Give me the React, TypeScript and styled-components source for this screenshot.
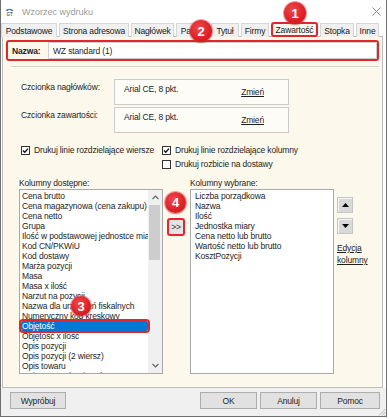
import React from 'react';
import styled, { createGlobalStyle } from 'styled-components';

const GlobalStyle = createGlobalStyle`
  html, body {
    margin: 0;
    padding: 0;
    background: #ffffff;
  }
  body {
    font-family: 'Liberation Sans', Arial, sans-serif;
    font-size: 8.5px;
    letter-spacing: -0.15px;
    color: #1e1e1e;
  }
`;

const CREAM = '#fcf8eb';
const RED = '#e3262b';

const availableColumns = [
  'Cena brutto',
  'Cena magazynowa (cena zakupu)',
  'Cena netto',
  'Grupa',
  'Ilość w podstawowej jednostce miary',
  'Kod CN/PKWiU',
  'Kod dostawy',
  'Marża pozycji',
  'Masa',
  'Masa x ilość',
  'Narzut na pozycji',
  'Nazwa dla urządzeń fiskalnych',
  'Numeryczny kod kreskowy',
  'Objętość',
  'Objętość x ilość',
  'Opis pozycji',
  'Opis pozycji (2 wiersz)',
  'Opis towaru',
  'Opis towaru (2 wiersz)',
];

const chosenColumns = [
  'Liczba porządkowa',
  'Nazwa',
  'Ilość',
  'Jednostka miary',
  'Cena netto lub brutto',
  'Wartość netto lub brutto',
  'KosztPozycji',
];

const tabs = [
  { label: 'Podstawowe', w: 56 },
  { label: 'Strona adresowa', w: 70 },
  { label: 'Nagłówek', w: 43 },
  { label: 'Papier', w: 33 },
  { label: 'Tytuł', w: 28 },
  { label: 'Firmy', w: 28 },
  { label: 'Zawartość', w: 47, active: true },
  { label: 'Stopka', w: 34 },
  { label: 'Inne', w: 23 },
];

const badges = [
  { n: 1, x: 283, y: 2, d: 22 },
  { n: 2, x: 189, y: 20, d: 22 },
  { n: 3, x: 70, y: 296, d: 20 },
  { n: 4, x: 164, y: 192, d: 21 },
];

const App = (): JSX.Element => {
  return (
    <>
      <GlobalStyle />
      <Window>
        <TitleBar>
          <AppIcon />
          <Title>Wzorzec wydruku</Title>
          <CloseIcon />
        </TitleBar>

        <TabStrip>
          {tabs.map((t) => (
            <Tab key={t.label} $w={t.w} $active={!!t.active}>
              {t.label}
            </Tab>
          ))}
        </TabStrip>

        <Panel>
          <NameRow>
            <NameLabel>Nazwa:</NameLabel>
            <NameInput>WZ standard (1)</NameInput>
          </NameRow>
          <Separator />

          <FontGrid>
            <FontLabel>Czcionka nagłówków:</FontLabel>
            <FontBox>
              <span>Arial CE, 8 pkt.</span>
              <Link $low>Zmień</Link>
            </FontBox>
            <FontLabel>Czcionka zawartości:</FontLabel>
            <FontBox>
              <span>Arial CE, 8 pkt.</span>
              <Link $low>Zmień</Link>
            </FontBox>
          </FontGrid>

          <CheckGrid>
            <CheckItem>
              <CheckBox checked />
              Drukuj linie rozdzielające wiersze
            </CheckItem>
            <CheckItem>
              <CheckBox checked />
              Drukuj linie rozdzielające kolumny
            </CheckItem>
            <span />
            <CheckItem>
              <CheckBox />
              Drukuj rozbicie na dostawy
            </CheckItem>
          </CheckGrid>

          <ColumnsArea>
            <ListLabel>Kolumny dostępne:</ListLabel>
            <span />
            <ListLabel>Kolumny wybrane:</ListLabel>
            <span />

            <ListBox>
              <Items $pad={1}>
                {availableColumns.map((c) => (
                  <Item key={c} $selected={c === 'Objętość'}>
                    {c}
                  </Item>
                ))}
              </Items>
              <ScrollBar>
                <ScrollArrow>
                  <Chevron dir="up" />
                </ScrollArrow>
                <Thumb />
                <ScrollArrow $end>
                  <Chevron dir="down" />
                </ScrollArrow>
              </ScrollBar>
            </ListBox>

            <MidColumn>
              <MoveButton>&gt;&gt;</MoveButton>
            </MidColumn>

            <ListBox>
              <Items $pad={3}>
                {chosenColumns.map((c) => (
                  <Item key={c}>{c}</Item>
                ))}
              </Items>
            </ListBox>

            <SideColumn>
              <ArrowButton>
                <Triangle dir="up" />
              </ArrowButton>
              <ArrowButton>
                <Triangle dir="down" />
              </ArrowButton>
              <EditLink>
                Edycja
                <br />
                kolumny
              </EditLink>
            </SideColumn>
          </ColumnsArea>
        </Panel>

        <BottomBar>
          <Button $w={56}>Wypróbuj</Button>
          <Spacer />
          <Button $w={57}>OK</Button>
          <Button $w={57}>Anuluj</Button>
          <Button $w={60}>Pomoc</Button>
          <Grip />
        </BottomBar>

        {badges.map((b) => (
          <Badge key={b.n} $x={b.x} $y={b.y} $d={b.d}>
            {b.n}
          </Badge>
        ))}
      </Window>
    </>
  );
};

export default App;

const AppIcon = (): JSX.Element => (
  <svg width="9" height="9" viewBox="0 0 9 9">
    <path d="M0.5 4 C1.5 1 7.5 1 8.5 4 L6.5 4 C5.5 2.6 3.5 2.6 2.5 4 Z" fill="#4b7aa3" />
    <text x="4.5" y="8.6" fontSize="4.6" fontWeight="bold" fill="#3f6f98" textAnchor="middle" fontFamily="Liberation Sans, sans-serif">
      GT
    </text>
  </svg>
);

const CloseIcon = (): JSX.Element => (
  <CloseWrap>
    <svg width="9" height="9" viewBox="0 0 9 9">
      <path d="M0.5 0.5 L8.5 8.5 M8.5 0.5 L0.5 8.5" stroke="#8c8c8c" strokeWidth="1" />
    </svg>
  </CloseWrap>
);

const CheckBox = ({ checked }: { checked?: boolean }): JSX.Element => (
  <Box>
    {checked && (
      <svg width="7" height="7" viewBox="0 0 7 7">
        <path d="M1 3.4 L2.8 5.2 L6 1.6" stroke="#111" strokeWidth="1.4" fill="none" />
      </svg>
    )}
  </Box>
);

const Chevron = ({ dir }: { dir: 'up' | 'down' }): JSX.Element => (
  <svg width="7" height="5" viewBox="0 0 7 5">
    <path d={dir === 'up' ? 'M0.5 4 L3.5 1 L6.5 4' : 'M0.5 1 L3.5 4 L6.5 1'} stroke="#606060" strokeWidth="1.1" fill="none" />
  </svg>
);

const Triangle = ({ dir }: { dir: 'up' | 'down' }): JSX.Element => (
  <svg width="7" height="4" viewBox="0 0 7 4">
    <path d={dir === 'up' ? 'M0 4 L3.5 0 L7 4 Z' : 'M0 0 L3.5 4 L7 0 Z'} fill="#000" />
  </svg>
);

const Grip = (): JSX.Element => (
  <GripWrap>
    <svg width="8" height="8" viewBox="0 0 8 8">
      <path d="M7.5 1 L1 7.5 M7.5 4 L4 7.5 M7.5 6.5 L6.5 7.5" stroke="#a8a8a8" strokeWidth="0.8" />
    </svg>
  </GripWrap>
);

const Window = styled.div`
  position: relative;
  width: 387px;
  height: 417px;
  box-sizing: border-box;
  border: 1px solid #6f6f6f;
  border-top: none;
  background: #ffffff;
  display: flex;
  flex-direction: column;
  overflow: hidden;
`;

const TitleBar = styled.div`
  height: 22px;
  display: flex;
  align-items: center;
  padding: 1px 0 0 4px;
  box-sizing: border-box;
`;

const Title = styled.div`
  margin-left: 8px;
  font-size: 9px;
  letter-spacing: 0;
  color: #9a9a9a;
`;

const CloseWrap = styled.div`
  margin-left: auto;
  margin-right: 5px;
  display: flex;
`;

const TabStrip = styled.div`
  height: 15px;
  display: flex;
  align-items: flex-end;
  gap: 2px;
`;

const Tab = styled.div<{ $w: number; $active?: boolean }>`
  width: ${(p) => p.$w}px;
  height: ${(p) => (p.$active ? 15 : 14)}px;
  box-sizing: border-box;
  flex-shrink: 0;
  display: flex;
  align-items: center;
  justify-content: center;
  white-space: nowrap;
  background: ${(p) => (p.$active ? CREAM : '#f0f0f0')};
  border: ${(p) => (p.$active ? `2px solid ${RED}` : '1px solid #d6d6d6')};
  border-bottom: ${(p) => (p.$active ? `2px solid ${RED}` : 'none')};
  border-radius: ${(p) => (p.$active ? '3px' : '0')};
  position: relative;
  z-index: ${(p) => (p.$active ? 1 : 0)};
  color: #1a1a1a;
`;

const Panel = styled.div`
  margin: -1px 3px 0 1px;
  height: 352px;
  box-sizing: border-box;
  border: 1px solid #bcbcbc;
  background: ${CREAM};
  display: flex;
  flex-direction: column;
`;

const NameRow = styled.div`
  margin: 3px 3px 0 3px;
  height: 21px;
  box-sizing: border-box;
  border: 2px solid ${RED};
  border-radius: 3px;
  display: flex;
  align-items: stretch;
  padding-left: 4px;
`;

const NameLabel = styled.div`
  width: 36px;
  display: flex;
  align-items: center;
  font-weight: bold;
`;

const NameInput = styled.div`
  flex: 1;
  background: #ffffff;
  border: 1px solid #cfcfcf;
  display: flex;
  align-items: center;
  padding-left: 4px;
`;

const Separator = styled.div`
  margin: 5px 3px 0 8px;
  border-top: 1px solid #d6d3ca;
  border-bottom: 1px solid #ffffff;
`;

const FontGrid = styled.div`
  margin: 11px 0 0 18px;
  display: grid;
  grid-template-columns: 93px 175px;
  grid-auto-rows: 26px;
  row-gap: 2px;
`;

const FontLabel = styled.div`
  padding-top: 3px;
  line-height: 10px;
`;

const FontBox = styled.div`
  box-sizing: border-box;
  border: 1px solid #cbcbcb;
  background: #fefcf6;
  display: flex;
  justify-content: space-between;
  align-items: flex-start;
  padding: 4px 24px 0 9px;
  line-height: 10px;
`;

const Link = styled.span<{ $low?: boolean }>`
  text-decoration: underline;
  margin-top: ${(p) => (p.$low ? 3 : 0)}px;
`;

const CheckGrid = styled.div`
  margin: 10px 0 0 18px;
  display: grid;
  grid-template-columns: 141px 1fr;
  grid-auto-rows: 14px;
`;

const CheckItem = styled.label`
  display: flex;
  align-items: center;
  gap: 4px;
  white-space: nowrap;
`;

const Box = styled.span`
  width: 9px;
  height: 9px;
  box-sizing: border-box;
  border: 1px solid #333333;
  background: #ffffff;
  display: flex;
  align-items: center;
  justify-content: center;
  flex-shrink: 0;
`;

const ColumnsArea = styled.div`
  margin: 7px 0 0 16px;
  display: grid;
  grid-template-columns: 144px 27px 144px auto;
  grid-template-rows: 11px 185px;
`;

const ListLabel = styled.div`
  line-height: 10px;
`;

const ListBox = styled.div`
  box-sizing: border-box;
  border: 1px solid #a9a9a9;
  background: #ffffff;
  display: flex;
  overflow-x: visible;
  overflow-y: clip;
`;

const Items = styled.div<{ $pad: number }>`
  flex: 1;
  min-width: 0;
  padding: 1px 0 0 ${(p) => p.$pad}px;
`;

const Item = styled.div<{ $selected?: boolean }>`
  height: 10px;
  line-height: 10px;
  padding-left: 1px;
  white-space: nowrap;
  overflow: hidden;
  background: ${(p) => (p.$selected ? '#0078d7' : 'transparent')};
  color: ${(p) => (p.$selected ? '#ffffff' : '#1e1e1e')};
  outline: ${(p) => (p.$selected ? `2px solid ${RED}` : 'none')};
  border-radius: ${(p) => (p.$selected ? '2px' : '0')};
  position: relative;
  z-index: ${(p) => (p.$selected ? 1 : 0)};
`;

const ScrollBar = styled.div`
  width: 14px;
  flex-shrink: 0;
  background: #f0f0f0;
  display: flex;
  flex-direction: column;
`;

const ScrollArrow = styled.div<{ $end?: boolean }>`
  height: 15px;
  display: flex;
  align-items: center;
  justify-content: center;
  margin-top: ${(p) => (p.$end ? 'auto' : '0')};
`;

const Thumb = styled.div`
  height: 55px;
  margin: 0 2px 0 1px;
  background: #cdcdcd;
`;

const MidColumn = styled.div`
  padding: 29px 0 0 4px;
`;

const MoveButton = styled.div`
  width: 18px;
  height: 18px;
  box-sizing: border-box;
  border: 2px solid ${RED};
  border-radius: 3px;
  background: #e4e4e4;
  display: flex;
  align-items: center;
  justify-content: center;
  font-size: 8.5px;
  color: #333;
`;

const SideColumn = styled.div`
  padding: 8px 0 0 3px;
  display: flex;
  flex-direction: column;
  align-items: flex-start;
  gap: 5px;
`;

const ArrowButton = styled.div`
  width: 16px;
  height: 16px;
  box-sizing: border-box;
  border: 1px solid #c4c4c4;
  background: #d9d9d9;
  box-shadow: inset 1px 1px 0 #f6f6f6;
  display: flex;
  align-items: center;
  justify-content: center;
`;

const EditLink = styled.div`
  margin-top: 3px;
  line-height: 12px;
  text-decoration: underline;
`;

const BottomBar = styled.div`
  position: relative;
  flex: 1;
  background: #f0f0f0;
  display: flex;
  align-items: flex-start;
  gap: 3px;
  padding: 4px 6px 0 9px;
`;

const Spacer = styled.div`
  flex: 1;
`;

const Button = styled.div<{ $w: number }>`
  width: ${(p) => p.$w}px;
  height: 17px;
  box-sizing: border-box;
  border: 1px solid #adadad;
  background: #e1e1e1;
  display: flex;
  align-items: center;
  justify-content: center;
  color: #1e1e1e;
`;

const GripWrap = styled.div`
  position: absolute;
  right: 0;
  bottom: 0;
  display: flex;
`;

const Badge = styled.div<{ $x: number; $y: number; $d: number }>`
  position: absolute;
  left: ${(p) => p.$x}px;
  top: ${(p) => p.$y}px;
  width: ${(p) => p.$d}px;
  height: ${(p) => p.$d}px;
  border-radius: 50%;
  background: radial-gradient(circle at 40% 35%, #f0484b 0%, #db1f25 60%, #c8151b 100%);
  box-shadow: 0 0 0 1px rgba(240, 90, 90, 0.55), 0 1px 2px rgba(0, 0, 0, 0.35);
  display: flex;
  align-items: center;
  justify-content: center;
  color: #ffffff;
  font-weight: bold;
  font-size: 13px;
  letter-spacing: 0;
  z-index: 5;
`;
